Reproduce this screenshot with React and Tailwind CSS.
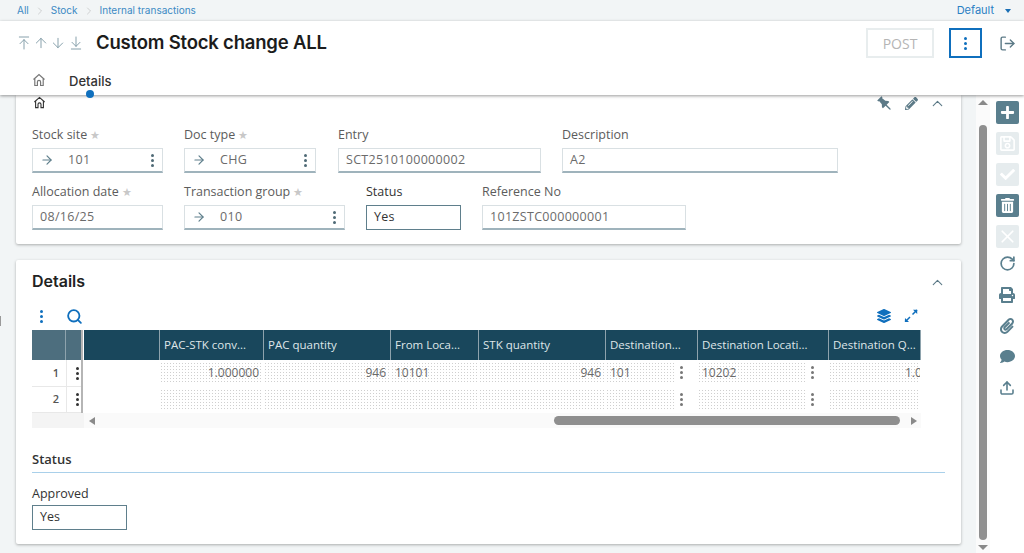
import { ArrowDown, ArrowDownToLine, ArrowRight, ArrowUp, ArrowUpToLine, ChevronRight, ChevronUp, LogOut, RotateCw, Search, Upload, X } from 'lucide-react'
import { FaCheck, FaComment, FaLayerGroup, FaPaperclip, FaPencilAlt, FaPlus, FaPrint, FaRegSave, FaTrashAlt } from 'react-icons/fa'

const dots = 'bg-[radial-gradient(#cfcfcf_0.75px,transparent_0.75px)] bg-[length:3px_3px]'

function HomeIcon({ className }) {
  return (
    <svg className={className} viewBox="0 0 14 14" fill="none" stroke="currentColor" strokeWidth="1.2" aria-hidden>
      <path d="M1.5 6.5 7 1.5l5.5 5M2.8 5.5v7h2.6V9a1.6 1.6 0 0 1 3.2 0v3.5h2.6v-7" />
    </svg>
  )
}

function PinIcon() {
  return (
    <svg viewBox="0 0 16 16" className="size-[16px]" fill="currentColor" aria-hidden>
      <path transform="rotate(-45 8 8)" d="M5 0h6v1.6h-1l.5 4.4 2 2.2v1.4H8.7v5.4L8 16l-.7-1.000V9.600H3.500V8.200l2-2.200L6 1.600H5z" />
    </svg>
  )
}

function Dots({ className = '' }) {
  return (
    <span className={`flex flex-col items-center gap-[2px] ${className}`}>
      <i className="size-[3px] rounded-full bg-current" />
      <i className="size-[3px] rounded-full bg-current" />
      <i className="size-[3px] rounded-full bg-current" />
    </span>
  )
}

function Field({ label, value, width, required, link, dark, className = '' }) {
  return (
    <div style={{ width }} className={className}>
      <div className={`mb-[4px] h-[18px] text-[12.5px] leading-[18px] ${dark ? 'font-medium text-[#333]' : 'text-[#5c5c5c]'}`}>
        {label}
        {required ? <span className="ml-[3px] text-[11px] text-[#c8c8c8]">★</span> : null}
      </div>
      <div
        className={`flex h-[25px] items-center pr-[8px] text-[12.5px] ${
          dark
            ? 'border border-[#5f7f8c] pl-[7px] text-[#333]'
            : 'border border-[#d9e0e3] border-b-2 border-b-[#9fb3bc] pl-[7px] text-[#6b6b6b]'
        }`}
      >
        {link ? <ArrowRight size={14} strokeWidth={2} className="mr-[14px] shrink-0 text-[#5f7f8c]" /> : null}
        <span className="flex-1 tracking-[0.3px]">{value}</span>
        {link ? <Dots className="text-[#4f6a76]" /> : null}
      </div>
    </div>
  )
}

function ToolButton({ icon: Icon, active, size }) {
  return (
    <div className={`flex h-[23px] w-[23px] items-center justify-center rounded-[2px] text-white ${active ? 'bg-[#5a7f8e]' : 'bg-[#e6ecee]'}`}>
      <Icon size={size} />
    </div>
  )
}

function ToolIcon({ children }) {
  return <div className="flex h-[31px] items-center justify-center">{children}</div>
}

const columns = [
  { title: 'PAC-STK conv...', width: 'w-[104px]', row1: '1.000000', align: 'right' },
  { title: 'PAC quantity', width: 'w-[127px]', row1: '946', align: 'right' },
  { title: 'From Loca...', width: 'w-[88px]', row1: '10101' },
  { title: 'STK quantity', width: 'w-[127px]', row1: '946', align: 'right' },
  { title: 'Destination...', width: 'w-[92px]', row1: '101', menu: true },
  { title: 'Destination Locati...', width: 'w-[131px]', row1: '10202', menu: true },
  { title: 'Destination Q...', width: 'w-[92px]', row1: '1.000000', align: 'clip' },
]

function Cell({ col, value, row }) {
  return (
    <div className={`${col.width} flex shrink-0 ${row === 1 ? 'h-[27px] pt-[2px]' : 'h-[26px] pt-[2px]'} pr-[1px]`}>
      <div className={`flex h-[22px] min-w-0 flex-1 items-center overflow-hidden whitespace-nowrap ${dots} text-[12px] text-[#6a6a6a] ${col.align === 'right' ? 'justify-end pr-[4px]' : col.align === 'clip' ? 'pl-[76px]' : 'pl-[4px]'}`}>
        <span>{value}</span>
      </div>
      {col.menu ? <Dots className="mt-[4px] w-[22px] shrink-0 bg-white pr-[9px] text-[#777]" /> : null}
    </div>
  )
}

function GridRow({ num, row }) {
  return (
    <div className="flex">
      <div className={`flex w-[34px] shrink-0 items-center justify-end border-b border-[#e8e8e8] pr-[7px] text-[11px] font-semibold text-[#555] ${row === 1 ? 'h-[27px]' : 'h-[26px]'}`}>{num}</div>
      <div className={`flex w-[15px] shrink-0 items-center justify-center border-b border-l border-[#e8e8e8] pl-[6px] text-[#333] ${row === 1 ? 'h-[27px]' : 'h-[26px]'}`}>
        <Dots />
      </div>
      <div className="w-[3px] shrink-0 border-l-2 border-[#b5b5b5]" />
      <div className="w-[76px] shrink-0" />
      {columns.map((col) => (
        <Cell key={col.title} col={col} row={row} value={row === 1 ? col.row1 : ''} />
      ))}
    </div>
  )
}

export default function App() {
  return (
    <div className="relative flex h-[553px] w-[1024px] flex-col overflow-hidden bg-[#f2f5f6] font-['Open_Sans',sans-serif]">
      <div className="absolute top-[316px] left-0 h-[10px] w-[1px] bg-[#9a9a9a]" />

      <div className="flex h-[21px] shrink-0 items-center justify-between pr-[13px] pl-[17px] font-['Inter',sans-serif] text-[10px] text-[#3b8ac4]">
        <div className="flex items-center">
          <span>All</span>
          <ChevronRight size={12} strokeWidth={1} className="mx-[5px] text-[#aaa]" />
          <span>Stock</span>
          <ChevronRight size={12} strokeWidth={1} className="mx-[5px] text-[#aaa]" />
          <span>Internal transactions</span>
        </div>
        <div className="flex items-center text-[11px] text-[#2a80c4]">
          Default
          <span className="ml-[11px] border-x-[3.5px] border-t-[4px] border-x-transparent border-t-[#1a6fb5]" />
        </div>
      </div>

      <div className="relative z-10 h-[74px] shrink-0 bg-white shadow-[0_1px_3px_rgba(0,0,0,0.4)]">
        <div className="flex h-[44px] items-center pl-[16px]">
          <div className="flex items-center text-[#7f9aa6]">
            <ArrowUpToLine size={16} strokeWidth={1.4} />
            <ArrowUp size={16} strokeWidth={1.4} className="ml-[1px]" />
            <ArrowDown size={16} strokeWidth={1.4} className="ml-[1px]" />
            <ArrowDownToLine size={16} strokeWidth={1.4} className="ml-[2px]" />
          </div>
          <h1 className="ml-[12px] font-['Inter',sans-serif] text-[18.5px] font-semibold tracking-[-0.2px] text-[#1c1c1c]">Custom Stock change ALL</h1>
          <div className="ml-auto flex items-center pr-[8px]">
            <div className="flex h-[30px] w-[68px] items-center justify-center border-2 border-[#e8edee] text-[14px] font-medium text-[#b5b5b5]">POST</div>
            <div className="ml-[15px] flex h-[30px] w-[33px] items-center justify-center border-2 border-[#0f6fbd] text-[#0f6fbd]">
              <Dots />
            </div>
            <LogOut size={17} strokeWidth={2} className="ml-[17px] text-[#5c7a87]" />
          </div>
        </div>
        <div className="relative flex h-[30px] items-start pl-[32px]">
          <HomeIcon className="mt-[8px] size-[14px] text-[#777]" />
          <span className="ml-[23px] mt-[7px] font-['Inter',sans-serif] text-[13px] font-medium text-[#333]">Details</span>
          <span className="absolute bottom-[-3px] left-[86px] size-[8px] rounded-full bg-[#0f6fbd]" />
        </div>
      </div>

      <div className="flex min-h-0 flex-1">
        <div className="flex w-[976px] shrink-0 flex-col gap-[16px] pr-[15px] pl-[16px]">
          <section className="h-[149px] shrink-0 rounded-b-[2px] bg-white shadow-[0_1px_3px_rgba(0,0,0,0.3)]">
            <div className="flex h-[31px] items-start justify-between pr-[15px] pl-[17px]">
              <HomeIcon className="mt-[1px] size-[13px] text-[#333]" />
              <div className="flex items-center text-[#5c7a87]">
                <PinIcon />
                <FaPencilAlt size={13} className="ml-[12px]" />
                <ChevronUp size={17} strokeWidth={1.6} className="ml-[11px]" />
              </div>
            </div>
            <div className="flex pl-[16px]">
              <Field label="Stock site" value="101" width={131} required link />
              <Field label="Doc type" value="CHG" width={132} required link className="ml-[21px]" />
              <Field label="Entry" value="SCT2510100000002" width={203} className="ml-[22px]" />
              <Field label="Description" value="A2" width={276} className="ml-[21px]" />
            </div>
            <div className="mt-[10px] flex pl-[16px]">
              <Field label="Allocation date" value="08/16/25" width={131} required />
              <Field label="Transaction group" value="010" width={161} required link className="ml-[21px]" />
              <Field label="Status" value="Yes" width={95} dark className="ml-[21px]" />
              <Field label="Reference No" value="101ZSTC000000001" width={204} className="ml-[21px]" />
            </div>
          </section>

          <section className="h-[284px] shrink-0 rounded-[2px] bg-white shadow-[0_1px_3px_rgba(0,0,0,0.3)]">
            <div className="flex h-[44px] items-center justify-between pr-[15px] pl-[16px]">
              <h2 className="-mt-[2px] font-['Inter',sans-serif] text-[16px] font-semibold text-[#222]">Details</h2>
              <ChevronUp size={17} strokeWidth={1.6} className="text-[#5c7a87]" />
            </div>
            <div className="mb-[2px] flex h-[24px] items-center pr-[43px] pl-[24px] text-[#0f6fbd]">
              <Dots />
              <Search size={17} strokeWidth={2.6} className="ml-[23px]" />
              <FaLayerGroup size={14} className="ml-auto" />
              <svg viewBox="0 0 14 14" className="ml-[13px] size-[14px]" fill="none" stroke="currentColor" strokeWidth="1.5" aria-hidden>
                <path d="M8.5 5.5 13 1M2 12l4-4" />
                <path d="M9 .8h4.2V5L9 .8ZM1 9l4 4H.8L1 9Z" fill="currentColor" stroke="none" />
              </svg>
            </div>
            <div className="mx-[16px] w-[889px] overflow-hidden">
              <div className="flex h-[30px] text-[11.5px] text-[#dfe6e9]">
                <div className="w-[34px] shrink-0 border-r border-[#8ea3ad] bg-[#4d6e7e]" />
                <div className="w-[15px] shrink-0 bg-[#4d6e7e]" />
                <div className="w-[3px] shrink-0 border-l-2 border-[#b5b5b5]" />
                <div className="w-[76px] shrink-0 border-r border-[#8ea3ad] bg-[#19475c]" />
                {columns.map((col) => (
                  <div key={col.title} className={`${col.width} flex shrink-0 items-center truncate border-r border-[#8ea3ad] bg-[#19475c] pl-[4px]`}>
                    {col.title}
                  </div>
                ))}
              </div>
              <GridRow num="1" row={1} />
              <GridRow num="2" row={2} />
              <div className="flex h-[15px] items-center">
                <div className="h-full w-[52px] shrink-0 bg-[#f4f4f4]" />
                <div className="flex h-full flex-1 items-center bg-[#fafafa] pr-[2px]">
                  <span className="ml-[5px] border-y-[4px] border-r-[6px] border-y-transparent border-r-[#8a8a8a]" />
                  <div className="ml-[459px] h-[9px] w-[346px] rounded-full bg-[#8f8f8f]" />
                  <span className="ml-[11px] border-y-[4px] border-l-[6px] border-y-transparent border-l-[#8a8a8a]" />
                </div>
              </div>
            </div>
            <div className="mx-[16px] mt-[19px] h-[26px] border-b border-[#a9d0ea] text-[13px] font-semibold leading-[24px] text-[#333]">Status</div>
            <div className="mt-[12px] ml-[16px] w-[95px]">
              <div className="mb-[2px] h-[18px] text-[12.5px] font-medium leading-[18px] text-[#333]">Approved</div>
              <div className="flex h-[25px] items-center border border-[#5f7f8c] pl-[7px] text-[12.5px] text-[#333]">Yes</div>
            </div>
          </section>
        </div>

        <div className="flex w-[14px] shrink-0 flex-col items-center bg-[#fbfbfb] pt-[5px]">
          <span className="border-x-[5px] border-b-[5px] border-x-transparent border-b-[#8a8a8a]" />
          <div className="mt-[20px] h-[415px] w-[8px] rounded-full bg-[#8f8f8f]" />
          <span className="mt-[5px] border-x-[5px] border-t-[5px] border-x-transparent border-t-[#8a8a8a]" />
        </div>

        <div className="flex flex-1 flex-col items-center gap-[8px] bg-white pt-[6px]">
          <ToolButton icon={FaPlus} size={15} active />
          <ToolButton icon={FaRegSave} size={17} />
          <ToolButton icon={FaCheck} size={15} />
          <ToolButton icon={FaTrashAlt} size={15} active />
          <ToolButton icon={X} size={21} />
          <div className="-mt-[8px] flex flex-col items-center text-[#5a7f8e]">
            <ToolIcon><RotateCw size={17} strokeWidth={2.4} /></ToolIcon>
            <ToolIcon><FaPrint size={16} /></ToolIcon>
            <ToolIcon><FaPaperclip size={16} /></ToolIcon>
            <ToolIcon><FaComment size={15} /></ToolIcon>
            <ToolIcon><Upload size={16} strokeWidth={2.4} /></ToolIcon>
          </div>
        </div>
      </div>
    </div>
  )
}
